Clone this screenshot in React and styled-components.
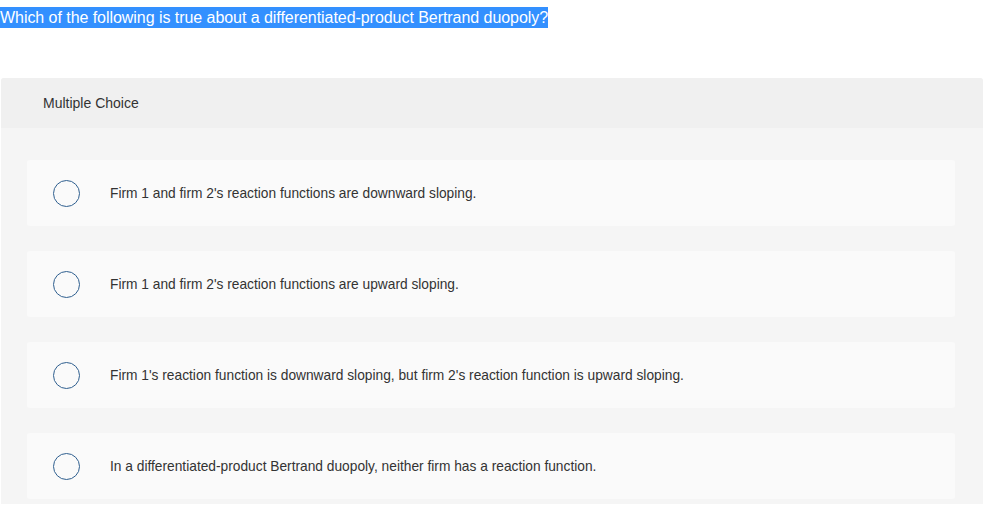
import styled, { createGlobalStyle } from "styled-components";

const GlobalStyle = createGlobalStyle`
  body {
    margin: 0;
    background: #ffffff;
    font-family: "Liberation Sans", Arial, sans-serif;
  }
`;

const Page = styled.div`
  padding: 7px 4px 0 0;
`;

const Question = styled.p`
  margin: 0;
  font-size: 16px;
  line-height: 21px;
  color: #ffffff;
  span {
    display: inline-block;
    background: #3390ff;
    letter-spacing: -0.05px;
  }
`;

const Panel = styled.div`
  margin: 50px 0 0 1px;
  background: #f5f5f5;
  border-radius: 3px 3px 0 0;
  padding-bottom: 5px;
`;

const PanelHeader = styled.div`
  background: #f0f0f0;
  height: 50px;
  display: flex;
  align-items: center;
  padding-left: 42px;
  font-size: 14px;
  color: #333333;
  border-radius: 3px 3px 0 0;
`;

const Options = styled.div`
  display: flex;
  flex-direction: column;
  gap: 25px;
  padding: 32px 28px 0 26px;
`;

const Option = styled.label`
  display: flex;
  align-items: center;
  height: 66px;
  background: #fafafa;
  border-radius: 3px;
  cursor: pointer;
`;

const Radio = styled.span`
  width: 27px;
  height: 27px;
  box-sizing: border-box;
  border: 1.5px solid #2f5f8f;
  border-radius: 50%;
  margin: 0 30px 0 26px;
  flex-shrink: 0;
`;

const OptionText = styled.span`
  font-size: 13.75px;
  color: #333333;
`;

const choices = [
  "Firm 1 and firm 2's reaction functions are downward sloping.",
  "Firm 1 and firm 2's reaction functions are upward sloping.",
  "Firm 1's reaction function is downward sloping, but firm 2's reaction function is upward sloping.",
  "In a differentiated-product Bertrand duopoly, neither firm has a reaction function.",
];

const App = () => {
  return (
    <Page>
      <GlobalStyle />
      <Question>
        <span>Which of the following is true about a differentiated-product Bertrand duopoly?</span>
      </Question>
      <Panel>
        <PanelHeader>Multiple Choice</PanelHeader>
        <Options>
          {choices.map((choice) => (
            <Option key={choice}>
              <Radio />
              <OptionText>{choice}</OptionText>
            </Option>
          ))}
        </Options>
      </Panel>
    </Page>
  );
};

export default App;
